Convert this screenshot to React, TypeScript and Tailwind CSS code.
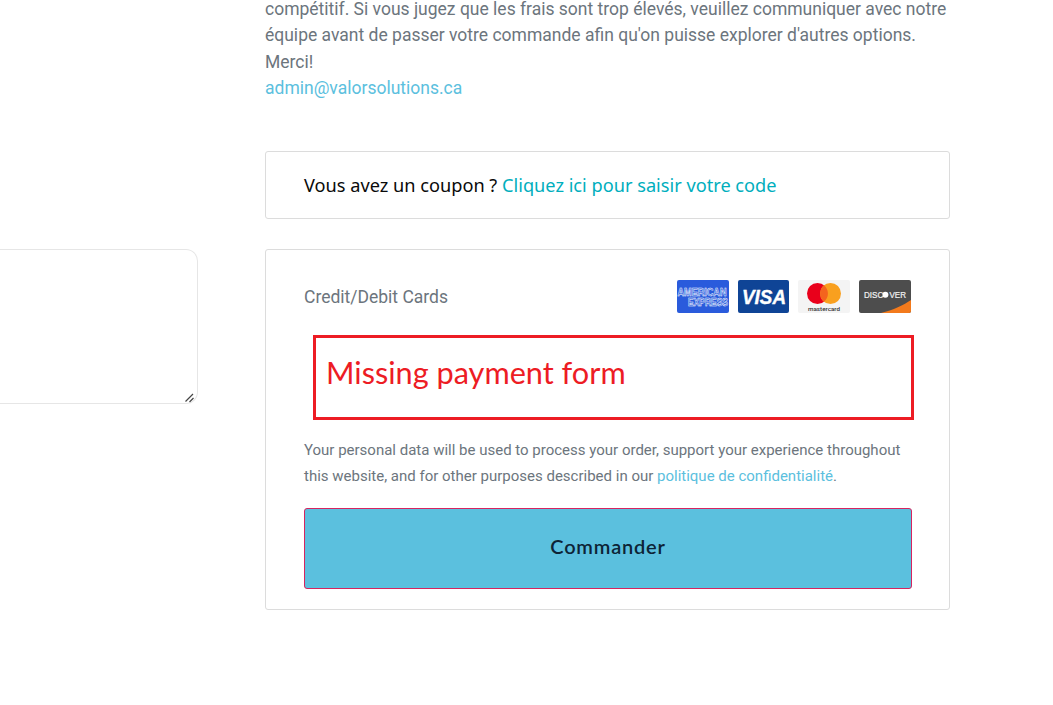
export default function App() {
  return (
    <div className="w-[1053px] h-[705px] overflow-hidden bg-white flex font-['Roboto',sans-serif]">
      <div className="w-[198px] shrink-0 pt-[249px]">
        <div className="relative h-[155px] border border-l-0 border-[#e6e6e6] rounded-r-[12px]">
          <svg className="absolute right-[1px] bottom-[0px]" width="11" height="11" viewBox="0 0 11 11">
            <path d="M0.5 9.5 L8 2 M4.5 10 L8.5 6" stroke="#444" strokeWidth="1.2" fill="none" />
          </svg>
        </div>
      </div>
      <div className="w-[685px] ml-[67px] shrink-0 -mt-[4px]">
        <p className="text-[17.5px] leading-[26.25px] text-[#6c757d]">
          compétitif. Si vous jugez que les frais sont trop élevés, veuillez communiquer avec notre équipe avant de passer votre commande afin qu'on puisse explorer d'autres options.
          <br />
          Merci!
          <br />
          <span className="text-[#5bc0de]">admin@valorsolutions.ca</span>
        </p>
        <div className="mt-[50px] h-[68px] border border-[#dcdcdc] rounded-[3px] pl-[38px] pt-[2px] flex items-center text-[18.2px] font-['Noto_Sans',sans-serif]">
          <span className="text-[#0a0a0a]">Vous avez un coupon ?&nbsp;</span>
          <span className="text-[#00aebd]">Cliquez ici pour saisir votre code</span>
        </div>
        <div className="mt-[30px] h-[361px] border border-[#dcdcdc] rounded-[3px] pl-[38px] pr-[38px] pt-[30px]">
          <div className="flex items-center justify-between h-[33px]">
            <span className="mt-[2px] text-[17.5px] text-[#6c757d]">Credit/Debit Cards</span>
            <div className="flex gap-[9px]">
              <svg width="52" height="33" viewBox="0 0 52 33">
                <rect width="52" height="33" rx="2" fill="#2a5bdc" />
                <text x="25" y="15.5" textAnchor="middle" fontFamily="Liberation Sans" fontWeight="700" fontSize="10" textLength="49" lengthAdjust="spacingAndGlyphs" fill="#2a5bdc" stroke="#ffffff" strokeWidth="0.5">AMERICAN</text>
                <text x="31" y="26" textAnchor="middle" fontFamily="Liberation Sans" fontWeight="700" fontSize="10" textLength="40" lengthAdjust="spacingAndGlyphs" fill="#2a5bdc" stroke="#ffffff" strokeWidth="0.5">EXPRESS</text>
              </svg>
              <svg width="51" height="33" viewBox="0 0 51 33">
                <rect width="51" height="33" rx="2" fill="#0f4496" />
                <text x="26" y="24" textAnchor="middle" fontFamily="Liberation Sans" fontWeight="700" fontStyle="italic" fontSize="21" textLength="44" lengthAdjust="spacingAndGlyphs" fill="#ffffff" stroke="#ffffff" strokeWidth="0.4">VISA</text>
              </svg>
              <svg width="52" height="33" viewBox="0 0 52 33">
                <rect width="52" height="33" rx="2" fill="#f4f4f4" />
                <circle cx="19.5" cy="13.5" r="10.5" fill="#e9001b" />
                <circle cx="32.5" cy="13.5" r="10.5" fill="#f9a01f" />
                <path d="M26 5.3 a10.5 10.5 0 0 1 0 16.4 a10.5 10.5 0 0 1 0 -16.4z" fill="#f4641e" />
                <text x="26" y="30.5" textAnchor="middle" fontFamily="Roboto" fontWeight="500" fontSize="6" textLength="32" lengthAdjust="spacingAndGlyphs" fill="#333333">mastercard</text>
              </svg>
              <svg width="52" height="33" viewBox="0 0 52 33">
                <rect width="52" height="33" rx="2" fill="#4d4d4d" />
                <path d="M22 33 C34 30 45 25 52 20 V31 a2 2 0 0 1 -2 2z" fill="#f37a1c" />
                <text x="26" y="17.8" textAnchor="middle" fontFamily="Liberation Sans" fontWeight="400" fontSize="8.5" textLength="42" lengthAdjust="spacingAndGlyphs" fill="#f2f2f2" stroke="#f2f2f2" strokeWidth="0.2">
                  DISC<tspan fill="none" stroke="none">O</tspan>VER
                </text>
                <circle cx="26.4" cy="14.8" r="3" fill="#ffffff" />
              </svg>
            </div>
          </div>
          <div className="ml-[9px] mt-[22px] w-[601px] h-[85px] border-[3px] border-[#ed1c24] pl-[10px] pt-[13px] text-[30.7px] leading-[44px] text-[#ed1c24] font-['Lato',sans-serif]">
            Missing payment form
          </div>
          <p className="mt-[17px] w-[608px] text-[15px] leading-[26px] text-[#6c757d]">
            Your personal data will be used to process your order, support your experience throughout this website, and for other purposes described in our <span className="text-[#5bc0de]">politique de confidentialité</span>.
          </p>
          <div className="mt-[19px] h-[81px] w-[608px] border border-[#d6245f] rounded-[3px] bg-[#5bc0de] flex items-center justify-center pb-[5px] text-[20px] tracking-[0.8px] font-semibold text-[#0d2436] font-['Lato',sans-serif]">
            Commander
          </div>
        </div>
      </div>
    </div>
  );
}
